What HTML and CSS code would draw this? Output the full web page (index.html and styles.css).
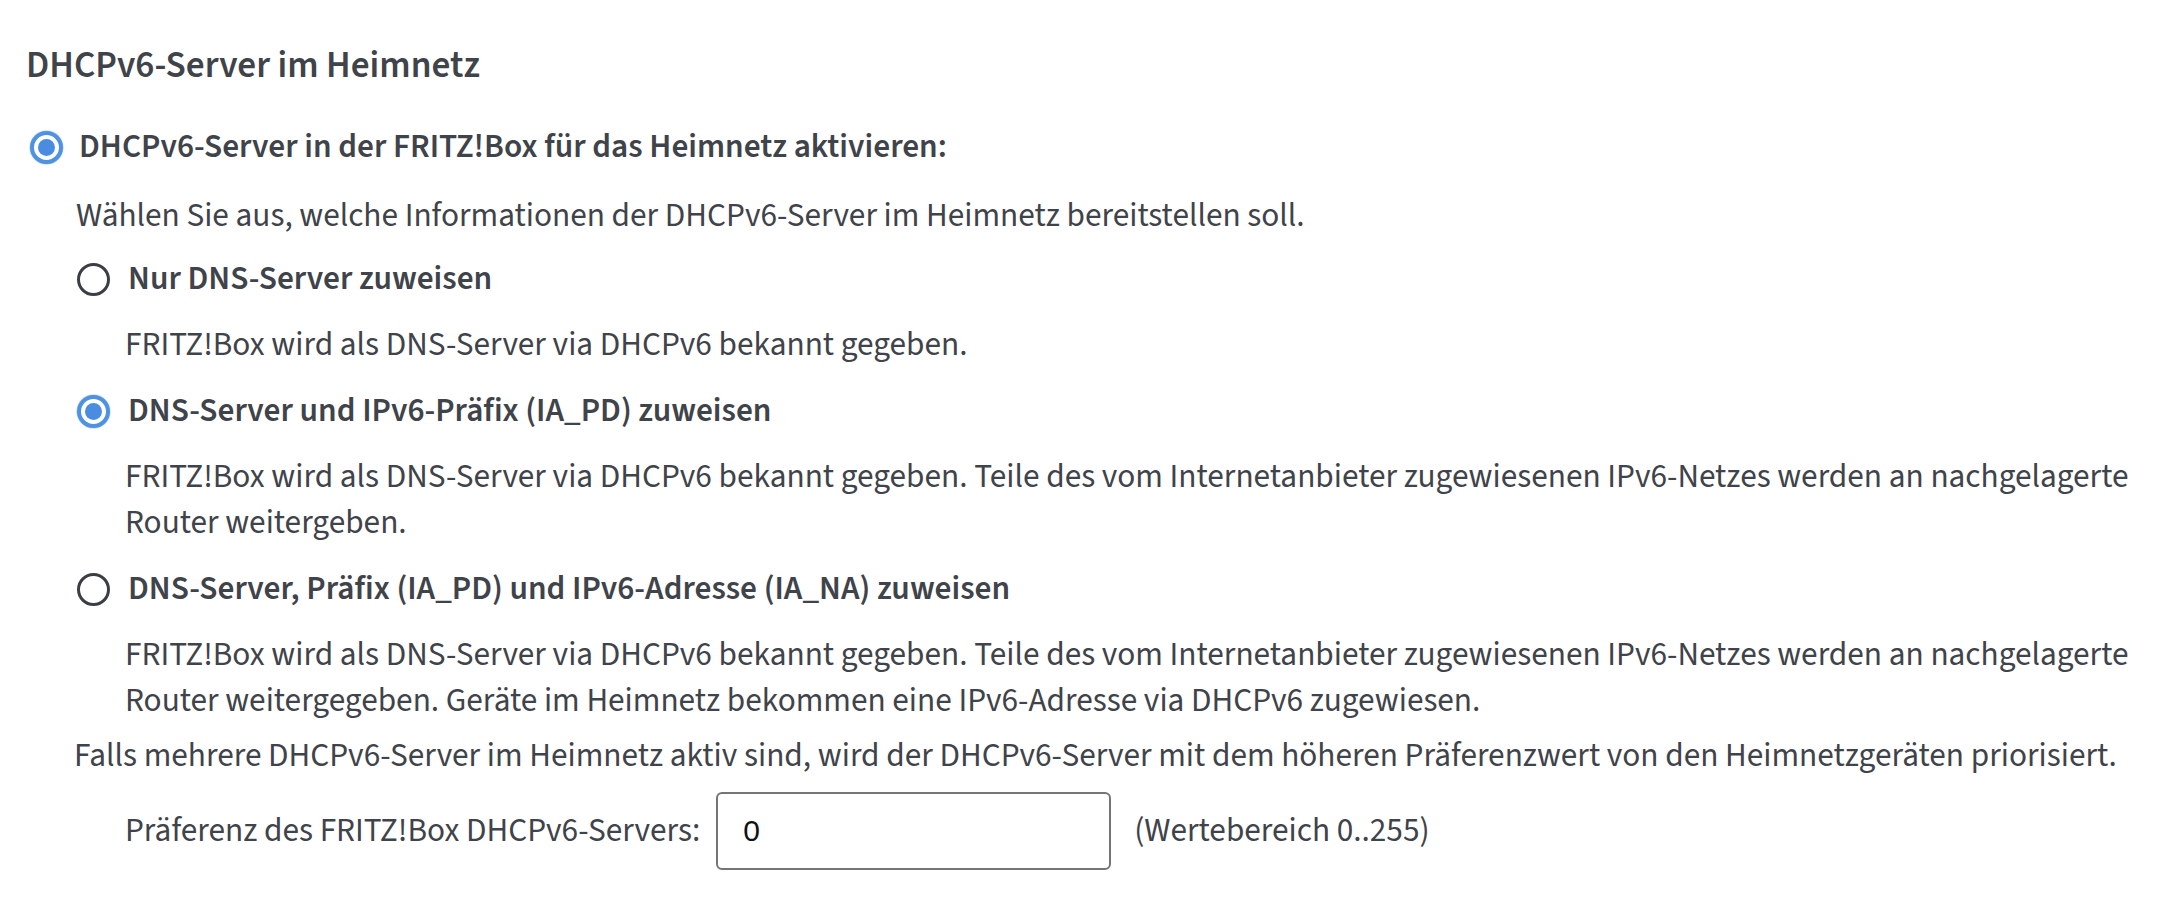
FILE: index.html
```html
<!DOCTYPE html>
<html lang="de">
<head>
<meta charset="utf-8">
<title>DHCPv6-Server im Heimnetz</title>
<link rel="stylesheet" href="styles.css">
</head>
<body>
<div class="page">
  <h2 class="title">DHCPv6-Server im Heimnetz</h2>

  <div class="opt opt-main">
    <span class="radio checked"></span>
    <span class="opt-label">DHCPv6-Server in der FRITZ!Box für das Heimnetz aktivieren:</span>
  </div>

  <div class="sub">
    <p class="intro">Wählen Sie aus, welche Informationen der DHCPv6-Server im Heimnetz bereitstellen soll.</p>

    <div class="choice">
      <div class="opt">
        <span class="radio"></span>
        <span class="opt-label">Nur DNS-Server zuweisen</span>
      </div>
      <p class="desc">FRITZ!Box wird als DNS-Server via DHCPv6 bekannt gegeben.</p>
    </div>

    <div class="choice">
      <div class="opt">
        <span class="radio checked"></span>
        <span class="opt-label">DNS-Server und IPv6-Präfix (IA_PD) zuweisen</span>
      </div>
      <p class="desc">FRITZ!Box wird als DNS-Server via DHCPv6 bekannt gegeben. Teile des vom Internetanbieter zugewiesenen IPv6-Netzes werden an nachgelagerte Router weitergeben.</p>
    </div>

    <div class="choice">
      <div class="opt">
        <span class="radio"></span>
        <span class="opt-label">DNS-Server, Präfix (IA_PD) und IPv6-Adresse (IA_NA) zuweisen</span>
      </div>
      <p class="desc">FRITZ!Box wird als DNS-Server via DHCPv6 bekannt gegeben. Teile des vom Internetanbieter zugewiesenen IPv6-Netzes werden an nachgelagerte Router weitergegeben. Geräte im Heimnetz bekommen eine IPv6-Adresse via DHCPv6 zugewiesen.</p>
    </div>

    <p class="note">Falls mehrere DHCPv6-Server im Heimnetz aktiv sind, wird der DHCPv6-Server mit dem höheren Präferenzwert von den Heimnetzgeräten priorisiert.</p>

    <div class="pref-row">
      <span class="pref-label">Präferenz des FRITZ!Box DHCPv6-Servers:</span>
      <div class="input-box">0</div>
      <span class="pref-hint">(Wertebereich 0..255)</span>
    </div>
  </div>
</div>
</body>
</html>
```
FILE: styles.css
```css
html, body {
  margin: 0;
  padding: 0;
  background: #ffffff;
}

body {
  font-family: "Source Sans 3", "Source Sans Pro", Lato, "Noto Sans", sans-serif;
  font-size: 33.3px;
  line-height: 46px;
  color: #3f434a;
}

.page {
  padding: 43px 0 0 28px;
  width: 2120px;
}

.title {
  margin: 0 0 35px -2px;
  font-size: 37.2px;
  line-height: 46px;
  font-weight: 600;
  color: #3f434a;
}

.opt {
  display: flex;
  align-items: center;
  gap: 16px;
}

.opt-main {
  padding-left: 2px;
  margin-bottom: 23px;
}

.opt-label {
  font-weight: 600;
}

.radio {
  flex: none;
  box-sizing: border-box;
  width: 33px;
  height: 33px;
  border-radius: 50%;
  border: 3px solid #3b3e44;
  background: #fff;
  position: relative;
}

.radio.checked {
  border: 4px solid #4f92e2;
  box-shadow: 0 0 1px 0.5px rgba(79, 146, 226, 0.45);
}

.radio.checked::after {
  content: "";
  position: absolute;
  left: 4px;
  top: 4px;
  width: 17px;
  height: 17px;
  border-radius: 50%;
  background: #4a8de0;
}

.sub {
  margin-left: 49px;
}

.intro {
  margin: 0 0 17px -1px;
}

.choice {
  margin-bottom: 20px;
}

.choice .opt {
  gap: 18px;
}

.choice .desc {
  margin: 20px 0 0 0;
  padding-left: 48px;
}

.note {
  margin: -11px 0 13px -3px;
}

.pref-row {
  display: flex;
  align-items: center;
  padding-left: 48px;
}

.pref-label {
  margin-right: 16px;
}

.input-box {
  box-sizing: border-box;
  width: 395px;
  height: 78px;
  border: 2px solid #737579;
  border-radius: 6px;
  padding: 0 25px;
  display: flex;
  align-items: center;
  font-family: "Liberation Sans", Arial, sans-serif;
  font-size: 30px;
  color: #111;
}

.pref-hint {
  margin-left: 23px;
}
```
